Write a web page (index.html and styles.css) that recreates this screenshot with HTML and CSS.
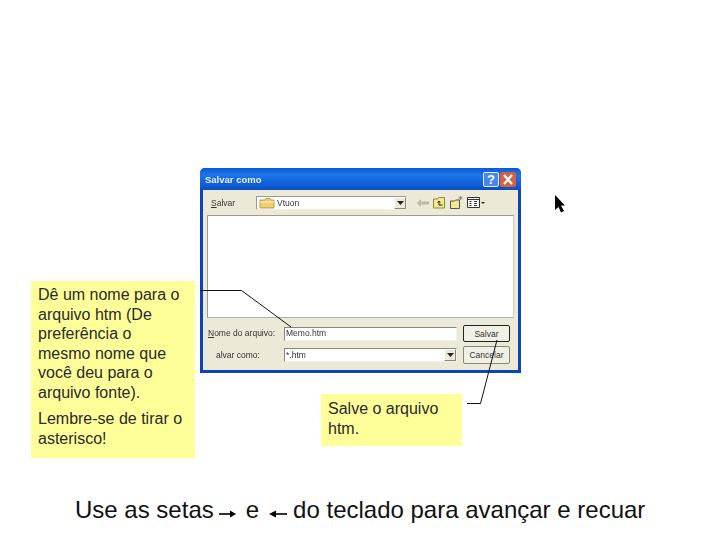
FILE: index.html
```html
<!DOCTYPE html>
<html lang="pt">
<head>
<meta charset="utf-8">
<title>Salvar como</title>
<link rel="stylesheet" href="styles.css">
</head>
<body>
<main class="slide">
  <section class="dialog">
    <header class="titlebar">
      <span class="title">Salvar como</span>
      <span class="winbtn help">?</span>
      <span class="winbtn close">
        <svg viewBox="0 0 16 15" width="16" height="15"><path d="M4 3l8 9M12 3l-8 9" stroke="#fff" stroke-width="2.2" fill="none"/></svg>
      </span>
    </header>
    <div class="body">
      <div class="toolbar">
        <span class="lbl lbl-top"><u>S</u>alvar</span>
        <div class="combo combo-top">
          <svg class="folder" viewBox="0 0 16 12" width="16" height="12"><path d="M1 3h5l1-1.500h4l1 1.500h3v8H1z" fill="#f0cf6c" stroke="#a88a3a" stroke-width=".8"/><path d="M1 5h14" stroke="#fff3bf"/></svg>
          <span class="val">Vtuon</span>
          <span class="drop"><svg viewBox="0 0 7 4" width="7" height="4"><path d="M0 0h7L3.500 4z" fill="#222"/></svg></span>
        </div>
        <div class="tools">
          <svg viewBox="0 0 12 8" width="12" height="8"><path d="M0 4l4-4v2.500h8v3H4V8z" fill="#b9b9ae"/></svg>
          <svg viewBox="0 0 13 13" width="13" height="13"><path d="M.5 3h4l1-1.500h6V12H.5z" fill="#f5e88a" stroke="#8a8a40"/><path d="M6 5v4h3.500M6 5L4.500 6.500M6 5l1.500 1.500" stroke="#222" fill="none"/></svg>
          <svg viewBox="0 0 13 13" width="13" height="13"><path d="M.5 5h4l1-1h4v8.500H.5z" fill="#f5e88a" stroke="#555"/><path d="M10.500 0v4M8.500 2h4M9 .5l3 3M12 .5l-3 3" stroke="#777" stroke-width=".7"/></svg>
          <span class="viewbtn">
            <svg viewBox="0 0 13 11" width="13" height="11"><path d="M.5.500h12v10H.5z" fill="#fff" stroke="#333"/><path d="M.5 2.500h12" stroke="#333"/><path d="M2.500 4.500h2M2.500 6.500h2M2.500 8.500h2M7 4.500h3M7 6.500h3M7 8.500h3" stroke="#333"/></svg>
            <svg viewBox="0 0 4 2" width="4" height="2"><path d="M0 0h4L2 2z" fill="#222"/></svg>
          </span>
        </div>
      </div>
      <div class="files"></div>
      <div class="form-row row-name">
        <span class="lbl lbl-form"><u>N</u>ome do arquivo:</span>
        <div class="input"><span class="val">Memo.htm</span></div>
        <span class="btn btn-default">Salvar</span>
      </div>
      <div class="form-row row-type">
        <span class="lbl lbl-form lbl-indent">alvar como:</span>
        <div class="combo input"><span class="val">*.htm</span><span class="drop"><svg viewBox="0 0 7 4" width="7" height="4"><path d="M0 0h7L3.500 4z" fill="#222"/></svg></span></div>
        <span class="btn">Cancelar</span>
      </div>
    </div>
  </section>

  <aside class="note note-name">
    <p>Dê um nome para o arquivo htm (De preferência o mesmo nome que você deu para o arquivo fonte).</p>
    <p>Lembre-se de tirar o asterisco!</p>
  </aside>
  <aside class="note note-save"><p>Salve o arquivo htm.</p></aside>

  <svg class="overlay" viewBox="0 0 720 540" width="720" height="540">
    <path d="M200 290.500H241.500L291 327" fill="none" stroke="#111" stroke-width="1"/>
    <path d="M497 340L480.500 403.500H467" fill="none" stroke="#111" stroke-width="1"/>
    <path d="M555 195V210L558.500 207L561 212.500L564 211L561 205.500H565Z" fill="#000"/>
  </svg>

  <p class="footer">
    <span>Use as setas</span>
    <svg class="arrow arrow-right" viewBox="0 0 17 8" width="17" height="8"><path d="M0 4h12" stroke="#000" stroke-width="1.600"/><path d="M11 .5L17 4l-6 3.500z" fill="#000"/></svg>
    <span class="e">e</span>
    <svg class="arrow arrow-left" viewBox="0 0 18 8" width="18" height="8"><path d="M6 4h12" stroke="#000" stroke-width="1.600"/><path d="M7 .5L0 4l7 3.500z" fill="#000"/></svg>
    <span>do teclado para avançar e recuar</span>
  </p>
</main>
</body>
</html>
```

FILE: styles.css
```css
* { box-sizing: border-box; }
html, body { margin: 0; padding: 0; background: #fff; }
.slide {
  position: relative;
  width: 720px;
  height: 540px;
  overflow: hidden;
  background: #fff;
  font-family: "Liberation Sans", Arial, sans-serif;
  color: #111;
}
.dialog {
  position: absolute;
  left: 200px;
  top: 168px;
  width: 321px;
  height: 205px;
  display: flex;
  flex-direction: column;
  background: #0a44b8;
  border-radius: 5px 5px 0 0;
  padding: 0 3px 3px;
  font-size: 8.500px;
  color: #333;
}
.titlebar {
  height: 22px;
  display: flex;
  align-items: center;
  gap: 1px;
  margin: 0 -3px;
  padding: 0 5px;
  background: linear-gradient(#0a58d8, #1f74e8 30%, #0c5cd4 80%, #0a4cc0);
  border-radius: 5px 5px 0 0;
}
.title {
  flex: 1;
  color: #e8f0ff;
  font-weight: bold;
  font-size: 9.500px;
  filter: blur(.4px);
}
.winbtn {
  width: 16px;
  height: 15px;
  border: 1px solid #e8eefc;
  border-radius: 2px;
  display: flex;
  align-items: center;
  justify-content: center;
  color: #fff;
  font-weight: bold;
  font-size: 13px;
}
.help { background: #4a86e8; }
.close { background: #d8603f; border-width: 0; }
.body {
  flex: 1;
  display: flex;
  flex-direction: column;
  background: #ece9d8;
  padding: 0 4px;
}
.toolbar {
  height: 25px;
  display: flex;
  align-items: center;
}
.lbl { filter: blur(.45px); }
.lbl-top { width: 49px; padding-left: 4px; }
.combo {
  display: flex;
  align-items: center;
  background: #fff;
}
.combo-top {
  width: 151px;
  height: 14px;
  border: 1px solid #a09c88;
  border-bottom-color: #f0eee0;
  border-right-color: #f0eee0;
  padding-left: 2px;
  gap: 2px;
}
.val { flex: 1; filter: blur(.45px); }
.drop {
  width: 12px;
  height: 12px;
  background: #ece9d8;
  border: 1px solid #8a8778;
  border-top-color: #fff;
  border-left-color: #fff;
  display: flex;
  align-items: center;
  justify-content: center;
}
.tools {
  display: flex;
  align-items: center;
  gap: 4px;
  margin-left: 10px;
}
.viewbtn {
  display: flex;
  align-items: center;
  gap: 1px;
}
.files {
  height: 103px;
  background: #fff;
  border: 1px solid #9c9c90;
  border-right-color: #d0cec0;
  border-bottom-color: #a8b0bc;
  margin-bottom: 7px;
}
.form-row {
  display: flex;
  align-items: center;
  height: 17px;
}
.row-name .lbl, .row-name .val { padding-bottom: 2px; }
.row-type { margin-top: 4px; height: 18px; }
.lbl-form { width: 77px; padding-left: 1px; }
.lbl-indent { padding-left: 9px; }
.input {
  width: 173px;
  height: 14px;
  background: #fff;
  border: 1px solid #8a8778;
  border-bottom-color: #f4f2e6;
  border-right-color: #f4f2e6;
  display: flex;
  align-items: center;
  padding-left: 1px;
}
.btn {
  width: 47px;
  height: 17px;
  margin-left: 6px;
  display: flex;
  align-items: center;
  justify-content: center;
  background: #f2f0e4;
  border: 1px solid #8a8778;
  border-radius: 2px;
}
.row-type .btn { height: 18px; }
.btn-default { border: 1.500px solid #222; }
.note {
  position: absolute;
  background: #ffff99;
  font-size: 16px;
  line-height: 19.500px;
  color: #2a2a2a;
}
.note p { margin: 0; }
.note-name {
  left: 31px;
  top: 281px;
  width: 164px;
  height: 177px;
  padding: 4px 7px;
}
.note-name p + p { margin-top: 7px; }
.note-save {
  left: 321px;
  top: 394px;
  width: 141px;
  height: 52px;
  padding: 5px 7px;
}
.overlay {
  position: absolute;
  left: 0;
  top: 0;
}
.footer {
  position: absolute;
  left: 75px;
  top: 497px;
  margin: 0;
  display: flex;
  align-items: center;
  white-space: nowrap;
  font-size: 24px;
  line-height: 26px;
  color: #111;
}
.arrow { flex: none; margin-top: 7px; }
.arrow-right { margin-left: 5px; }
.e { margin-left: 10px; }
.arrow-left { margin-left: 10px; }
.arrow-left + span { margin-left: 6px; }
```
